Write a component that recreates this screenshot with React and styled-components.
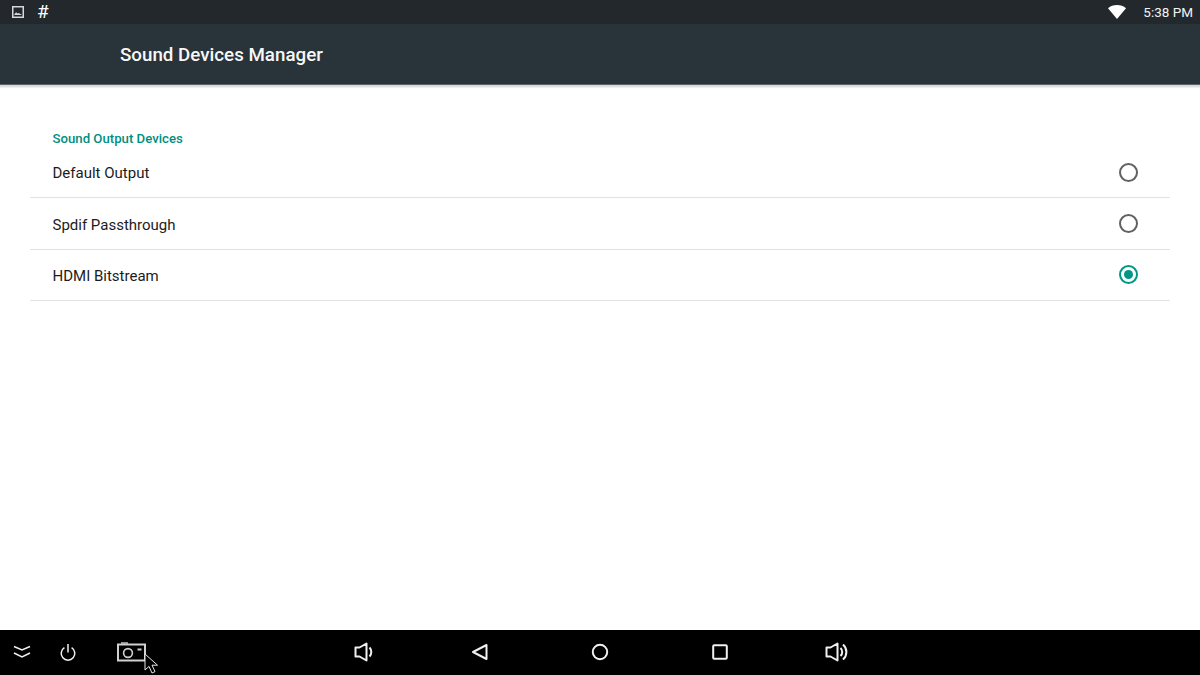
import styled, { createGlobalStyle } from "styled-components";

const GlobalStyle = createGlobalStyle`
  html, body { margin: 0; padding: 0; background: #fff; }
  body { font-family: Roboto, "Liberation Sans", sans-serif; }
`;

const devices = [
  { name: "Default Output", selected: false },
  { name: "Spdif Passthrough", selected: false },
  { name: "HDMI Bitstream", selected: true },
];

const Screen = styled.div`
  width: 1200px;
  height: 675px;
  display: flex;
  flex-direction: column;
  overflow: hidden;
  background: #fff;
`;

const StatusBar = styled.div`
  height: 24px;
  flex: none;
  display: flex;
  align-items: center;
  padding: 0 7px 0 12px;
  background: #22282c;
  color: #fff;
`;

const StatusLeft = styled.div`
  display: flex;
  align-items: center;
  gap: 13px;
  flex: 1;
`;

const Hash = styled.span`
  font-size: 19px;
  line-height: 24px;
  width: 14px;
  color: #fff;
`;

const Clock = styled.span`
  font-size: 13.5px;
  line-height: 24px;
  margin-left: 17px;
  color: #f2f3f3;
`;

const AppBar = styled.header`
  height: 60px;
  flex: none;
  display: flex;
  align-items: center;
  padding: 1px 0 0 120px;
  box-sizing: border-box;
  background: #28333a;
  box-shadow: 0 1px 0 #59636a, 0 2px 0 #d9d9d9, 0 3px 0 #dedede, 0 4px 1px #efefef;
  position: relative;
`;

const Title = styled.h1`
  margin: 0;
  font-size: 18.75px;
  font-weight: 500;
  color: #f7f8f8;
`;

const Content = styled.main`
  flex: 1;
  padding: 46px 30px 0;
`;

const SectionTitle = styled.div`
  font-size: 13.2px;
  font-weight: 500;
  line-height: 17px;
  padding-left: 22.5px;
  color: #008f81;
`;

const Row = styled.div`
  height: 50.4px;
  display: flex;
  align-items: center;
  justify-content: space-between;
  padding: 0 32px 0 22.5px;
  border-bottom: 1px solid #e2e2e2;
  &:first-of-type {
    margin-top: 1px;
  }
`;

const RowLabel = styled.span`
  font-size: 15px;
  color: #1c1c1c;
  padding-top: 2px;
`;

const Radio = styled.span`
  width: 19px;
  height: 19px;
  box-sizing: border-box;
  border-radius: 50%;
  border: 2px solid ${(p) => (p.$on ? "#009688" : "#616161")};
  display: flex;
  align-items: center;
  justify-content: center;
  &::after {
    content: "";
    width: 9px;
    height: 9px;
    border-radius: 50%;
    background: ${(p) => (p.$on ? "#009688" : "transparent")};
  }
`;

const NavBar = styled.nav`
  height: 45px;
  flex: none;
  box-sizing: border-box;
  padding-bottom: 1px;
  display: grid;
  grid-template-columns: 44px 48px 80px 134px 116px 116px 124px 116px 118px;
  background: #000;
`;

const NavSlot = styled.div`
  position: relative;
  display: flex;
  align-items: center;
  justify-content: center;
`;

const NavGap = styled.div``;

const Cursor = styled.svg`
  position: absolute;
  left: 52px;
  top: 23px;
`;

const stroke = { fill: "none", stroke: "#f0f0f0", strokeWidth: 2 };

const Icons = {
  gallery: (
    <svg width="12" height="12" viewBox="0 0 12 12">
      <path d="M0 0h12v12H0z M1.5 1.5v9h9v-9z" fill="#d6d8d9" fillRule="evenodd" />
      <path d="M2 9 4 6.2l1.6 1.4 1.2-.6L10 9z" fill="#d6d8d9" />
    </svg>
  ),
  wifi: (
    <svg width="18" height="14" viewBox="0 0 18 14">
      <path d="M0 3.2C2.4 1.2 5.5 0 9 0s6.6 1.2 9 3.2L9 14z" fill="#fff" />
    </svg>
  ),
  chevrons: (
    <svg width="20" height="14" viewBox="0 0 20 14">
      <path d="M2 1.5 10 5l8-3.5M2 8l8 4 8-4" {...stroke} strokeWidth="1.5" />
    </svg>
  ),
  power: (
    <svg width="18" height="18" viewBox="0 0 18 18">
      <path d="M9 1v8.5M5.4 4.6a6.8 6.8 0 1 0 7.2 0" {...stroke} strokeWidth="1.5" />
    </svg>
  ),
  camera: (
    <svg width="30" height="20" viewBox="0 0 30 20">
      <path d="M1 2.5h27v16H1z" fill="none" stroke="#d0d0d0" strokeWidth="2" />
      <path d="M4 1h7" stroke="#d0d0d0" strokeWidth="1.4" />
      <circle cx="11" cy="11" r="4.4" fill="none" stroke="#d0d0d0" strokeWidth="1.6" />
      <path d="M20.5 7.5h4" stroke="#d0d0d0" strokeWidth="2" />
    </svg>
  ),
  volumeDown: (
    <svg width="20" height="20" viewBox="0 0 20 20">
      <path d="M1.5 5.5h4L12.5 1.5v17l-7-4h-4z" {...stroke} strokeLinejoin="round" />
      <path d="M15.5 5.5a6.5 6.5 0 0 1 0 9" {...stroke} />
    </svg>
  ),
  back: (
    <svg width="18" height="18" viewBox="0 0 18 18">
      <path d="M2 9 15.5 2v14z" {...stroke} strokeLinejoin="round" />
    </svg>
  ),
  home: (
    <svg width="18" height="18" viewBox="0 0 18 18">
      <circle cx="9" cy="9" r="7.2" {...stroke} />
    </svg>
  ),
  recents: (
    <svg width="16" height="16" viewBox="0 0 16 16">
      <rect x="1.2" y="1.2" width="13.6" height="13.6" rx="1" {...stroke} />
    </svg>
  ),
  volumeUp: (
    <svg width="24" height="20" viewBox="0 0 24 20">
      <path d="M1.5 5.5h4L12.5 1.5v17l-7-4h-4z" {...stroke} strokeLinejoin="round" />
      <path d="M15.5 6a5.5 5.5 0 0 1 0 8M18 2.5a10 10 0 0 1 0 15" {...stroke} />
    </svg>
  ),
};

export default function App() {
  return (
    <Screen>
      <GlobalStyle />
      <StatusBar>
        <StatusLeft>
          {Icons.gallery}
          <Hash>#</Hash>
        </StatusLeft>
        {Icons.wifi}
        <Clock>5:38 PM</Clock>
      </StatusBar>
      <AppBar>
        <Title>Sound Devices Manager</Title>
      </AppBar>
      <Content>
        <SectionTitle>Sound Output Devices</SectionTitle>
        {devices.map((d) => (
          <Row key={d.name}>
            <RowLabel>{d.name}</RowLabel>
            <Radio $on={d.selected} />
          </Row>
        ))}
      </Content>
      <NavBar>
        <NavSlot>{Icons.chevrons}</NavSlot>
        <NavSlot>{Icons.power}</NavSlot>
        <NavSlot>
          {Icons.camera}
          <Cursor width="16" height="22" viewBox="0 0 16 22">
            <path d="M1 1v16l4-3.6 3 6.6 3-1.4-3-6.4h5.5z" fill="#000" stroke="#e6e6e6" strokeWidth="1" />
          </Cursor>
        </NavSlot>
        <NavGap />
        <NavSlot>{Icons.volumeDown}</NavSlot>
        <NavSlot>{Icons.back}</NavSlot>
        <NavSlot>{Icons.home}</NavSlot>
        <NavSlot>{Icons.recents}</NavSlot>
        <NavSlot>{Icons.volumeUp}</NavSlot>
      </NavBar>
    </Screen>
  );
}
